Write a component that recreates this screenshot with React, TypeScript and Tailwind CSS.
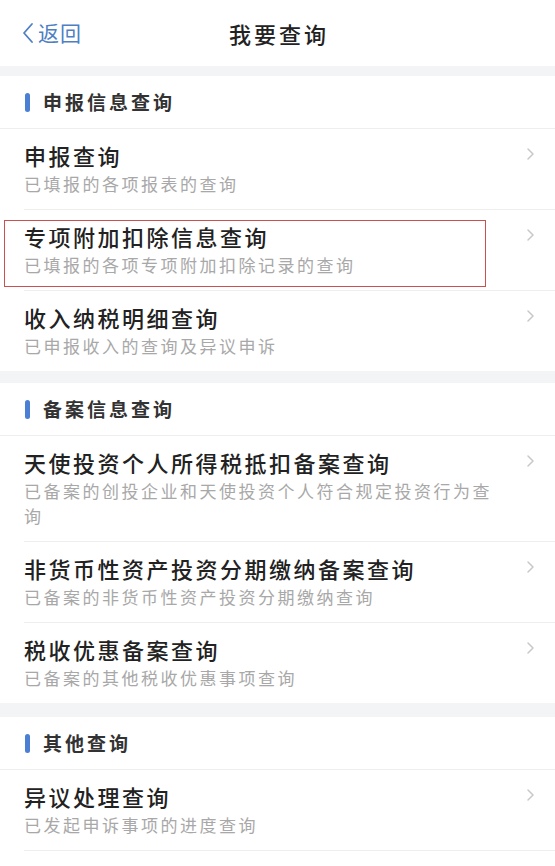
import React from "react";

type Item = { title: string; desc: string; highlight?: boolean };
type Section = { name: string; items: Item[] };

const sections: Section[] = [
  {
    name: "申报信息查询",
    items: [
      { title: "申报查询", desc: "已填报的各项报表的查询" },
      { title: "专项附加扣除信息查询", desc: "已填报的各项专项附加扣除记录的查询", highlight: true },
      { title: "收入纳税明细查询", desc: "已申报收入的查询及异议申诉" },
    ],
  },
  {
    name: "备案信息查询",
    items: [
      { title: "天使投资个人所得税抵扣备案查询", desc: "已备案的创投企业和天使投资个人符合规定投资行为查询" },
      { title: "非货币性资产投资分期缴纳备案查询", desc: "已备案的非货币性资产投资分期缴纳查询" },
      { title: "税收优惠备案查询", desc: "已备案的其他税收优惠事项查询" },
    ],
  },
  {
    name: "其他查询",
    items: [{ title: "异议处理查询", desc: "已发起申诉事项的进度查询" }],
  },
];

function Chevron() {
  return (
    <svg width="9" height="14" viewBox="0 0 9 14" className="shrink-0">
      <path d="M2 2l5 5-5 5" fill="none" stroke="#c8c8c8" strokeWidth="1.5" strokeLinecap="round" strokeLinejoin="round" />
    </svg>
  );
}

function Row({ item, last }: { item: Item; last: boolean }) {
  return (
    <div className="relative pl-6">
      {item.highlight && (
        <div className="absolute left-[4px] top-[10px] w-[482px] h-[67px] border-[1.5px] border-[#c9514f] pointer-events-none" />
      )}
      <div className={"flex items-start pr-5 pt-[12px] pb-[13px] " + (last ? "" : "border-b border-[#eeeeee]")}>
        <div className="w-[482px]">
          <div className="text-[22px] leading-[28px] tracking-[2.5px] font-medium text-[#222222]">{item.title}</div>
          <div className="mt-[2px] text-[17px] leading-[25px] tracking-[2.5px] text-[#a8a8a8]">{item.desc}</div>
        </div>
        <div className="ml-auto pt-[6px]">
          <Chevron />
        </div>
      </div>
    </div>
  );
}

export default function App() {
  return (
    <div
      className="min-h-[866px] w-[555px] bg-white"
      style={{ fontFamily: '"Noto Sans CJK SC", "Noto Sans", sans-serif' }}
    >
      {/* 顶部导航 */}
      <div className="relative flex items-center justify-center h-[66px] bg-white">
        <div className="absolute left-[22px] top-0 h-full flex items-center gap-[4px] text-[#4f7fc3]">
          <svg width="12" height="22" viewBox="0 0 12 22">
            <path d="M10 2L2 11l8 9" fill="none" stroke="#4f7fc3" strokeWidth="1.8" strokeLinecap="round" strokeLinejoin="round" />
          </svg>
          <span className="text-[21px] tracking-[1px]">返回</span>
        </div>
        <span className="text-[22px] font-medium tracking-[3px] text-[#222222] pl-[3px]">我要查询</span>
      </div>

      {sections.map((s, i) => (
        <div key={s.name}>
          <div className={"bg-[#f3f4f6] " + (i === 0 ? "h-[10px]" : i === 1 ? "h-[12px]" : "h-[14px]")} />
          <div className="flex items-center gap-[13px] pl-[25px] h-[53px] border-b border-[#eeeeee]">
            <div className="w-[5px] h-[19px] rounded-full bg-[#4a7fd4]" />
            <span className="text-[19px] font-bold tracking-[3px] text-[#333333]">{s.name}</span>
          </div>
          {s.items.map((it, j) => (
            <Row key={it.title} item={it} last={i < sections.length - 1 && j === s.items.length - 1} />
          ))}
        </div>
      ))}
    </div>
  );
}
